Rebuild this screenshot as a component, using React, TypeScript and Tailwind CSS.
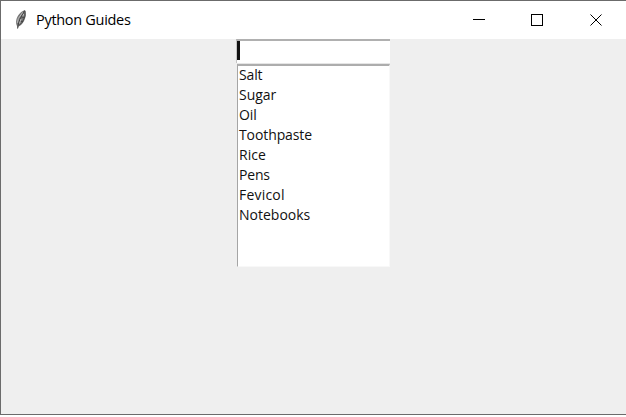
import React from 'react';

const items = [
  { name: 'Salt', spacing: 'tracking-[-0.15px]' },
  { name: 'Sugar', spacing: 'tracking-[-0.05px]' },
  { name: 'Oil', spacing: 'tracking-[-0.05px]' },
  { name: 'Toothpaste', spacing: 'tracking-[-0.1px]' },
  { name: 'Rice', spacing: 'tracking-[0px]' },
  { name: 'Pens', spacing: 'tracking-[-0.2px]' },
  { name: 'Fevicol', spacing: 'tracking-[0.2px]' },
  { name: 'Notebooks', spacing: 'tracking-[0px]' },
];

function Feather() {
  return (
    <svg width="14" height="22" viewBox="0 0 14 22" className="block">
      <path d="M10.8 1.2C7 2.3 3.4 6.4 2.4 10.5C1.8 13 2 15.5 3.2 17.4L3.7 20L4.6 17.5C8.6 15.9 11.2 11 11.7 6.5C12 4.4 11.7 2.5 10.8 1.2Z" fill="#777" />
      <path d="M10.8 1.4C8.2 5.8 4.5 11 3.6 19.5M7.5 8L10.7 8.5M5.7 12L9 12.7" fill="none" stroke="#333" strokeWidth="0.8" />
      <path d="M8.7 3.4L4.3 9.6L3.4 13.8M9.7 5L8.8 7.3M7 10L5.5 14.5" fill="none" stroke="#c5c5c5" strokeWidth="0.9" />
      <path d="M11 2V7L8.5 13L5 16.5" fill="none" stroke="#444" strokeWidth="0.9" />
    </svg>
  );
}

function TitleBar() {
  return (
    <header className="flex h-[38px] items-center bg-white pl-[13px]">
      <Feather />
      <h1 className="ml-2 text-[14.5px] leading-5 tracking-[-0.3px] whitespace-nowrap">Python Guides</h1>
      <div className="ml-auto flex gap-[46px] pr-[23px]">
        <svg width="12" height="12" shapeRendering="crispEdges"><path d="M0 5.5H12" stroke="#000" /></svg>
        <svg width="12" height="12" shapeRendering="crispEdges"><rect x=".5" y=".5" width="11" height="11" fill="none" stroke="#000" /></svg>
        <svg width="14" height="12"><path d="M.5 .5L11.5 11.5M11.5 .5L.5 11.5" transform="translate(1 0)" stroke="#000" strokeWidth="1" /></svg>
      </div>
    </header>
  );
}

export default function App() {
  return (
    <div className="h-[417px] w-[626px] overflow-hidden bg-white font-['Open_Sans','Noto_Sans',sans-serif] text-black">
      <main className="flex h-[415px] flex-col border-t border-b border-l border-[#6b6b6b] bg-[#efefef]">
        <TitleBar />
        <div className="ml-[235px] flex h-[24px] w-[154px] border-t-2 border-l border-t-[#b0b0b0] border-l-[#c5c5c5] bg-white">
          <div className="h-[19px] w-[3px] bg-[#111]" />
        </div>
        <div className="ml-[236px] h-px w-[153px] bg-[#e5e5e5]" />
        <ul className="ml-[236px] h-[203px] w-[153px] border-t-2 border-r border-b border-l border-t-[#adadad] border-r-[#f8f8f8] border-b-[#f8f8f8] border-l-[#a5a5a5] bg-white pl-px text-[14px] leading-5 text-[#111]">
          {items.map((item) => <li key={item.name} className={`-mt-px mb-px ${item.spacing}`}>{item.name}</li>)}
        </ul>
      </main>
    </div>
  );
}
